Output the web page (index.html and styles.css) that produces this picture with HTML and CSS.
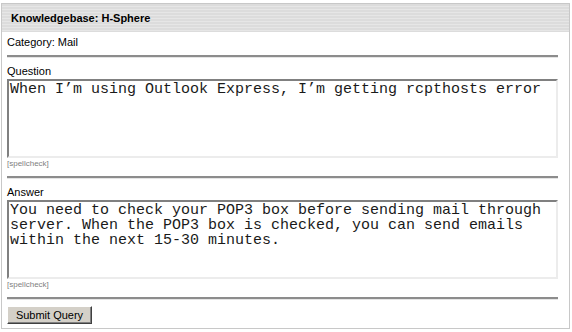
FILE: index.html
```html
<!DOCTYPE html>
<html lang="en">

<head>
    <meta charset="UTF-8">
    <title>Knowledgebase: H-Sphere</title>
    <link rel="stylesheet" href="styles.css">
</head>

<body>
    <div class="panel">
        <div class="panel-title">Knowledgebase: H-Sphere</div>
        <form class="panel-body">
            <div class="field">Category: Mail</div>
            <hr>
            <div class="field">
                <label>Question</label>
                <textarea rows="5">When I’m using Outlook Express, I’m getting rcpthosts error</textarea>
                <span class="spell">[spellcheck]</span>
            </div>
            <hr>
            <div class="field">
                <label>Answer</label>
                <textarea rows="5">You need to check your POP3 box before sending mail through server. When the POP3 box is checked, you can send emails within the next 15-30 minutes.</textarea>
                <span class="spell">[spellcheck]</span>
            </div>
            <hr>
            <div class="actions">
                <button type="button">Submit Query</button>
            </div>
        </form>
    </div>
</body>

</html>
```

FILE: styles.css
```css
body {
    margin: 3px 0 0 1px;
    font-family: "Liberation Sans", Arial, sans-serif;
    font-size: 11px;
    color: #000;
    background: #fff;
}

.panel {
    width: 567px;
    border: 1px solid #c8c8c8;
    border-top: none;
}

.panel-title {
    height: 28px;
    line-height: 28px;
    padding-left: 9px;
    font-weight: bold;
    font-size: 11px;
    background: repeating-linear-gradient(to bottom, #dcdcdc 0, #dcdcdc 2px, #e6e6e6 2px, #e6e6e6 3px);
    border-top: 1px solid #c8c8c8;
}

.panel-body {
    margin: 0;
    padding: 3px 11px 4px 5px;
}

.field {
    display: flex;
    flex-direction: column;
    line-height: 14px;
}

.field label {
    padding-bottom: 1px;
}

textarea {
    box-sizing: border-box;
    width: 551px;
    height: 79px;
    margin: 0;
    padding: 1px 1px;
    resize: none;
    font-family: "Liberation Mono", "Courier New", monospace;
    font-size: 15px;
    line-height: 15px;
    color: #1a1a1a;
    border: 2px solid;
    border-color: #808080 #ececec #ececec #808080;
    overflow: hidden;
}

.spell {
    font-size: 8px;
    line-height: 12px;
    color: #808080;
}

hr {
    margin: 6px 0 6px;
    height: 0;
    border: none;
    border-top: 2px solid #8c8c8c;
    border-bottom: 1px solid #e4e4e4;
}

.actions {
    padding-top: 0;
}

button {
    display: block;
    font-family: "Liberation Sans", Arial, sans-serif;
    font-size: 11px;
    width: 85px;
    height: 18px;
    padding: 0;
    background: #d4d0c8;
    color: #000;
    border: 1px solid;
    border-color: #fff #404040 #404040 #fff;
    box-shadow: inset -1px -1px 0 #808080;
}
```
